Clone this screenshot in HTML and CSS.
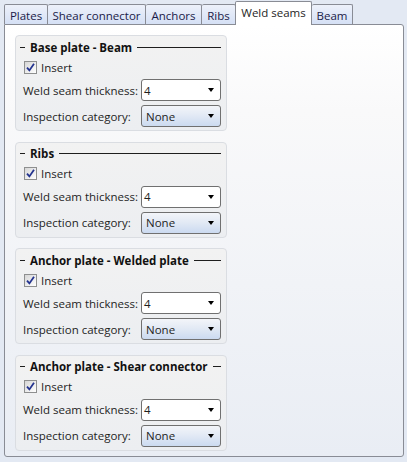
FILE: index.html
```html
<!DOCTYPE html>
<html>
<head>
<meta charset="utf-8">
<link rel="stylesheet" href="styles.css">
</head>
<body>
<div class="tabs">
  <div class="tab t-plates">Plates</div>
  <div class="tab t-shear">Shear connector</div>
  <div class="tab t-anchors">Anchors</div>
  <div class="tab t-ribs">Ribs</div>
  <div class="tab tab-active t-weld">Weld seams</div>
  <div class="tab t-beam">Beam</div>
</div>
<div class="panel">
  <div class="group">
    <div class="title"><span class="dash"></span><span class="title-text">Base plate - Beam</span><span class="rule"></span></div>
    <div class="check-row"><span class="check"><svg width="9" height="9" viewBox="0 0 9 9"><path d="M1 4.6 L3.4 7.4 L8 0.8" fill="none" stroke="#23338f" stroke-width="1.8"/></svg></span><span>Insert</span></div>
    <div class="field"><span class="label">Weld seam thickness:</span><div class="combo combo-edit"><span>4</span><span class="arrow"></span></div></div>
    <div class="field"><span class="label">Inspection category:</span><div class="combo combo-drop"><span>None</span><span class="arrow"></span></div></div>
  </div>
  <div class="group">
    <div class="title"><span class="dash"></span><span class="title-text">Ribs</span><span class="rule"></span></div>
    <div class="check-row"><span class="check"><svg width="9" height="9" viewBox="0 0 9 9"><path d="M1 4.6 L3.4 7.4 L8 0.8" fill="none" stroke="#23338f" stroke-width="1.8"/></svg></span><span>Insert</span></div>
    <div class="field"><span class="label">Weld seam thickness:</span><div class="combo combo-edit"><span>4</span><span class="arrow"></span></div></div>
    <div class="field"><span class="label">Inspection category:</span><div class="combo combo-drop"><span>None</span><span class="arrow"></span></div></div>
  </div>
  <div class="group">
    <div class="title"><span class="dash"></span><span class="title-text">Anchor plate - Welded plate</span><span class="rule"></span></div>
    <div class="check-row"><span class="check"><svg width="9" height="9" viewBox="0 0 9 9"><path d="M1 4.6 L3.4 7.4 L8 0.8" fill="none" stroke="#23338f" stroke-width="1.8"/></svg></span><span>Insert</span></div>
    <div class="field"><span class="label">Weld seam thickness:</span><div class="combo combo-edit"><span>4</span><span class="arrow"></span></div></div>
    <div class="field"><span class="label">Inspection category:</span><div class="combo combo-drop"><span>None</span><span class="arrow"></span></div></div>
  </div>
  <div class="group">
    <div class="title"><span class="dash"></span><span class="title-text">Anchor plate - Shear connector</span><span class="rule"></span></div>
    <div class="check-row"><span class="check"><svg width="9" height="9" viewBox="0 0 9 9"><path d="M1 4.6 L3.4 7.4 L8 0.8" fill="none" stroke="#23338f" stroke-width="1.8"/></svg></span><span>Insert</span></div>
    <div class="field"><span class="label">Weld seam thickness:</span><div class="combo combo-edit"><span>4</span><span class="arrow"></span></div></div>
    <div class="field"><span class="label">Inspection category:</span><div class="combo combo-drop"><span>None</span><span class="arrow"></span></div></div>
  </div>
</div>
</body>
</html>
```

FILE: styles.css
```css
html, body {
  margin: 0;
  padding: 0;
}
body {
  width: 407px;
  height: 462px;
  background: #e3e9f3;
  font-family: "Open Sans", "Noto Sans", sans-serif;
  font-size: 11.5px;
  color: #1e1e1e;
  overflow: hidden;
}
.tabs {
  display: flex;
  align-items: flex-end;
  height: 24px;
  padding-left: 4px;
  position: relative;
  z-index: 2;
}
.tab {
  box-sizing: border-box;
  height: 20px;
  border: 1px solid #898c95;
  border-bottom: none;
  border-left: none;
  background: linear-gradient(#edf1fa, #d5e0f5);
  color: #1b1b48;
  display: flex;
  align-items: center;
  justify-content: center;
  padding-top: 1px;
  border-radius: 2px 2px 0 0;
}
.t-plates { width: 44px; border-left: 1px solid #898c95; }
.t-shear { width: 98px; }
.t-anchors { width: 56px; }
.t-ribs { width: 34px; }
.t-weld { width: 77px; }
.t-beam { width: 41px; }
.tab-active {
  height: 24px;
  margin-bottom: -1px;
  background: #ffffff;
  border-left: 1px solid #898c95;
  margin-left: -1px;
  padding-top: 0;
  padding-bottom: 3px;
  color: #1e1e1e;
}
.panel {
  box-sizing: border-box;
  margin-left: 4px;
  width: 400px;
  height: 433px;
  border: 1px solid #898c95;
  border-radius: 0 3px 3px 3px;
  background: linear-gradient(#ffffff, #f9f9fa 20%, #e9edf4);
  padding: 10px 10px 0 10px;
  display: flex;
  flex-direction: column;
  gap: 10.66px;
}
.group {
  box-sizing: border-box;
  flex: none;
  width: 212px;
  height: 96px;
  border: 1px solid #dadde2;
  border-radius: 4px;
  background: linear-gradient(#f2f2f2, #eceef1);
  padding: 2px 5px 0 7px;
  display: flex;
  flex-direction: column;
}
.title {
  height: 18px;
  display: flex;
  align-items: center;
  margin-left: -3px;
}
.dash {
  width: 5px;
  height: 1px;
  background: #1e1e1e;
  margin-right: 5px;
}
.title-text {
  font-weight: 700;
  color: #111;
}
.rule {
  flex: 1;
  height: 1px;
  background: #1e1e1e;
  margin-left: 5px;
}
.check-row {
  height: 18px;
  margin-top: 2px;
  display: flex;
  align-items: center;
  gap: 4px;
}
.check {
  box-sizing: border-box;
  width: 13px;
  height: 13px;
  margin-left: 1px;
  border: 1px solid #8e8f8f;
  background: linear-gradient(135deg, #d6d6d6, #ffffff);
  display: flex;
  align-items: center;
  justify-content: center;
}
.field {
  display: flex;
  align-items: center;
  height: 22px;
  margin-top: 3px;
}
.field + .field {
  margin-top: 4px;
}
.label {
  width: 118px;
  flex: none;
}
.combo {
  box-sizing: border-box;
  width: 80px;
  height: 22px;
  border: 1px solid #707070;
  border-radius: 3px;
  display: flex;
  align-items: center;
  justify-content: space-between;
  padding: 0 6px 0 2px;
}
.combo-edit {
  background: #ffffff;
}
.combo-drop {
  padding-left: 4px;
  background: linear-gradient(#f3f5f9, #e3eaf5 45%, #cbdaf0);
}
.arrow {
  width: 0;
  height: 0;
  border-left: 3.5px solid transparent;
  border-right: 3.5px solid transparent;
  border-top: 4px solid #000;
}
```
